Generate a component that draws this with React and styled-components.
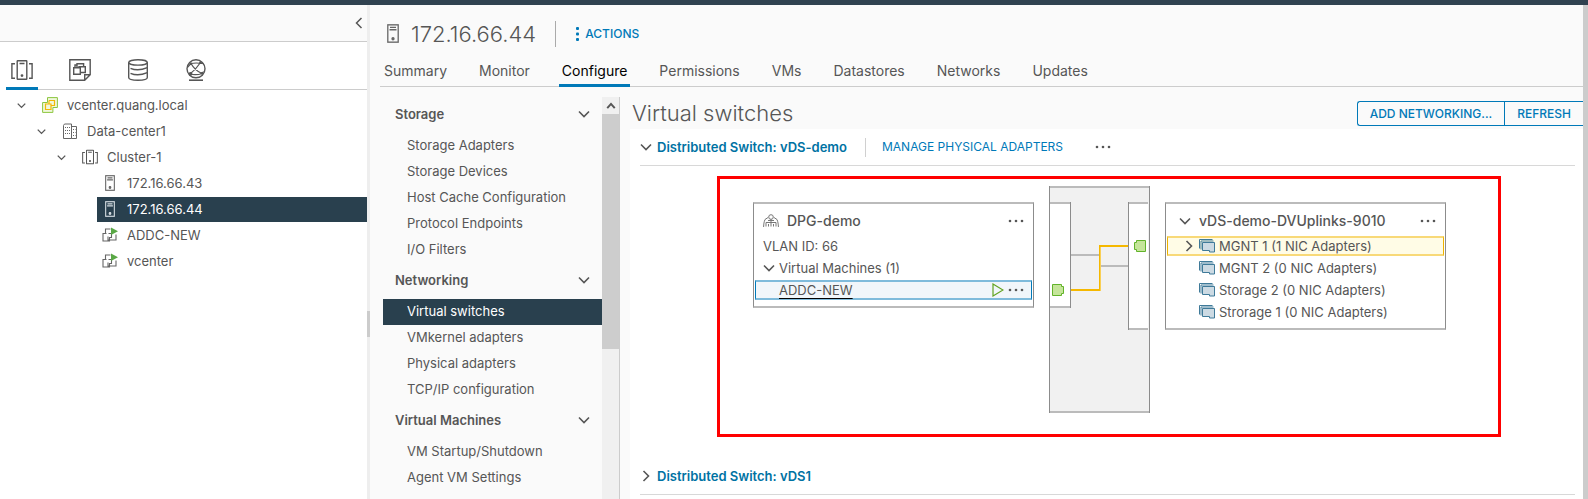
import React from "react";
import styled, { createGlobalStyle, css } from "styled-components";

const Global = createGlobalStyle`
  *, *::before, *::after { box-sizing: border-box; }
  body {
    margin: 0;
    background: #fafafa;
    color: #565656;
    font: 400 13px/24px Inter, "Open Sans", sans-serif;
  }
  button { font: inherit; color: inherit; background: none; border: 0; padding: 0; cursor: pointer; }
  a { color: inherit; text-decoration: none; }
  ul { list-style: none; margin: 0; padding: 0; }
  h1, h2, h3 { margin: 0; font-weight: inherit; font-size: inherit; }
  svg { display: block; flex: none; }
`;

const blue = "#0079b8";
const navy = "#29404e";

/* ---------- shell ---------- */
const Shell = styled.div`
  display: flex;
  flex-direction: column;
  height: 100vh;
  overflow: hidden;
`;
const TopBar = styled.header`
  flex: none;
  height: 5px;
  background: #304250;
`;
const Columns = styled.div`
  flex: 1;
  display: flex;
  min-height: 0;
`;
const Sidebar = styled.aside`
  flex: none;
  width: 367px;
  background: #fff;
`;
const SidebarHead = styled.div`
  display: flex;
  align-items: center;
  justify-content: flex-end;
  height: 37px;
  padding-right: 2px;
  background: #fafafa;
  border-bottom: 1px solid #ccc;
`;
const Splitter = styled.div`
  flex: none;
  display: flex;
  align-items: center;
  width: 3px;
  background: #eee;
`;
const Grip = styled.div`
  width: 3px;
  height: 26px;
  margin-top: 144px;
  background: #ccc;
`;
const Main = styled.main`
  flex: 1;
  min-width: 0;
  display: flex;
  flex-direction: column;
`;
const PageScroll = styled.div`
  flex: none;
  width: 5px;
  background: #ccc;
`;

/* ---------- inventory ---------- */
const ViewTabs = styled.div`
  display: flex;
  gap: 26px;
  height: 48px;
  margin-left: 6px;
  border-bottom: 1px solid #ccc;
`;
const ViewTab = styled.button`
  display: flex;
  align-items: center;
  justify-content: center;
  width: 32px;
  height: 48px;
  padding-top: 10px;
  border-bottom: 3px solid ${(p) => (p.$active ? blue : "transparent")};
`;
const Tree = styled.ul`
  padding-top: 2px;
`;
const TreeItem = styled.li`
  padding-left: ${(p) => p.$depth * 20}px;
  height: 26px;
  padding-top: 1px;
`;
const TreeLink = styled.a`
  display: flex;
  align-items: center;
  height: 25px;
  margin-left: ${(p) => (p.$leaf ? 17 : 0)}px;
  padding: 0 0 1px ${(p) => (p.$leaf ? 4 : 17)}px;
  ${(p) => p.$active && css`
    background: ${navy};
    color: #fff;
  `}
`;
const TreeIcon = styled.span`
  display: flex;
  justify-content: center;
  width: 18px;
  margin: 0 8px 0 ${(p) => (p.$leaf ? 0 : 15)}px;
`;

/* ---------- object header ---------- */
const ObjectHead = styled.div`
  display: flex;
  align-items: center;
  height: 56px;
  padding: 1px 0 0 17px;
`;
const ObjectName = styled.h1`
  margin: 0 19px 0 12px;
  font-size: 22px;
  font-weight: 300;
  line-height: 28px;
`;
const Rule = styled.span`
  width: 1px;
  height: ${(p) => (p.$tall ? 26 : 19)}px;
  background: ${(p) => (p.$tall ? "#aaa" : "#d0d0d0")};
`;
const Caps = styled.button`
  display: inline-flex;
  align-items: center;
  gap: 6px;
  font-size: 12px;
  font-weight: 500;
  text-transform: uppercase;
  white-space: nowrap;
  color: ${blue};
`;
const ActionsButton = styled(Caps)`
  margin-left: 20px;
`;
const Tabs = styled.nav`
  display: flex;
  gap: 26px;
  height: 26px;
  margin-left: 10px;
  padding-left: 1px;
  border-bottom: 1px solid #ccc;
`;
const Tab = styled.button`
  height: 26px;
  padding: 0 3px 3px;
  font-size: 14px;
  line-height: 20px;
  border-bottom: 3px solid ${(p) => (p.$active ? blue : "transparent")};
  color: ${(p) => (p.$active ? "#000" : "#565656")};
`;

/* ---------- configure ---------- */
const Work = styled.div`
  flex: 1;
  display: flex;
  min-height: 0;
`;
const Settings = styled.nav`
  flex: none;
  width: 232px;
  padding: 10px 0 0 13px;
  overflow: hidden;
`;
const GroupHead = styled.button`
  display: flex;
  align-items: center;
  justify-content: space-between;
  width: 100%;
  height: 36px;
  padding: 0 12px 2px;
  font-weight: 600;
`;
const SettingLink = styled.a`
  display: block;
  height: 26px;
  padding-left: 24px;
  ${(p) => p.$active && css`
    background: ${navy};
    color: #fff;
  `}
`;
const NavScroll = styled.div`
  flex: none;
  width: 18px;
  margin: 10px 10px 0 0;
  background: #f0f0f0;
  border-right: 1px solid #ccc;
`;
const NavScrollUp = styled.button`
  display: flex;
  align-items: center;
  justify-content: center;
  width: 17px;
  height: 17px;
`;
const NavThumb = styled.div`
  height: 235px;
  background: #cdcdcd;
`;
const Content = styled.section`
  flex: 1;
  min-width: 0;
  display: flex;
  flex-direction: column;
`;
const TitleRow = styled.div`
  display: flex;
  justify-content: space-between;
  height: 42px;
  padding: 14px 0 0 2px;
`;
const Title = styled.h2`
  font-size: 22px;
  font-weight: 300;
`;
const ButtonGroup = styled.div`
  display: flex;
  height: 25px;
  border: 1px solid ${blue};
  border-right: 0;
  border-radius: 3px 0 0 3px;
`;
const GroupButton = styled(Caps)`
  padding: 0 12px;
  & + & { border-left: 1px solid ${blue}; }
`;
const Board = styled.div`
  flex: 1;
  padding: 0 8px 0 10px;
  background: #fff;
`;
const SwitchHead = styled.div`
  display: flex;
  align-items: center;
  height: 37px;
  border-bottom: 1px solid #d8d8d8;
`;
const SwitchToggle = styled.button`
  display: flex;
  align-items: center;
  gap: 5px;
  margin-right: 18px;
  font-weight: 600;
  color: #0072a3;
`;
const Manage = styled(Caps)`
  margin: 0 32px 0 16px;
  font-weight: 400;
`;
const Highlight = styled.div`
  height: 261px;
  margin: 10px 74px 21px 77px;
  padding: 7px 33px 0;
  border: 3px solid #f00;
`;
const Topology = styled.div`
  display: flex;
  align-items: flex-start;
  gap: 15px;
`;
const Card = styled.article`
  display: flex;
  flex-direction: column;
  gap: 2px;
  width: 281px;
  margin-top: 16px;
  padding: 4px 1px 6px;
  border: solid #8c8c8c;
  border-width: 2px 1px;
  border-top-color: #bbb;
  border-bottom-color: #bbb;
`;
const CardHead = styled.div`
  display: flex;
  align-items: center;
  height: 26px;
  padding: 0 8px 0 ${(p) => (p.$wide ? 12 : 8)}px;
`;
const CardTitle = styled.h3`
  flex: 1;
  margin-left: 8px;
  font-size: 14px;
  font-weight: 500;
`;
const CardRow = styled.div`
  display: flex;
  align-items: center;
  gap: 4px;
  height: 20px;
  padding: 0 7px 0 ${(p) => p.$indent}px;
  border: solid transparent;
  border-width: 2px 1px;
  ${(p) => p.$tone === "blue" && css`
    background: #f1f6fa;
    border-color: #7fbbdb ${blue};
  `}
  ${(p) => p.$tone === "gold" && css`
    background: #fffce6;
    border-color: #f8d978 #edb200;
  `}
`;
const RowLabel = styled.span`
  flex: 1;
`;
const VmLink = styled.a`
  margin-right: auto;
  text-decoration: underline;
  text-decoration-color: #000;
  text-underline-offset: 3px;
`;
const IconButton = styled.button`
  display: flex;
`;
const UplinkBlank = styled.span`
  width: 12px;
`;

/* ---------- icons ---------- */
const Chevron = ({ dir = "down", size = 12, w = 1.6 }) => {
  const d = {
    down: "M1 3.5l5 5 5-5",
    up: "M1.5 8.5l4.5-5 4.5 5",
    left: "M8.5 1l-5 5 5 5",
    right: "M3.5 1l5 5-5 5",
  }[dir];
  return (
    <svg width={size} height={size} viewBox="0 0 12 12" fill="none" stroke="#565656" strokeWidth={w} aria-hidden="true">
      <path d={d} />
    </svg>
  );
};
const Dots = () => (
  <svg width="16" height="4" viewBox="0 0 16 4" fill="#565656" aria-hidden="true">
    <circle cx="2" cy="2" r="1.3" /><circle cx="8" cy="2" r="1.3" /><circle cx="14" cy="2" r="1.3" />
  </svg>
);
const ClusterIcon = ({ size = 22 }) => (
  <svg width={size} height={size} viewBox="0 0 22 22" fill="none" stroke="#565656" strokeWidth="1.4" aria-hidden="true">
    <rect x="6.2" y="1.7" width="9.6" height="18.6" rx="0.5" />
    <path d="M8.5 4.5h5M4 4.7H.9v14.6H4M18 4.7h3.1v14.6H18" />
    <circle cx="11" cy="16.6" r="0.7" fill="#565656" />
  </svg>
);
const VmsIcon = () => (
  <svg width="22" height="22" viewBox="0 0 22 22" fill="none" stroke="#565656" strokeWidth="1.4" aria-hidden="true">
    <path d="M.8.8h20.4v14.9l-5.5 5.5H.8zM15.700 21.200v-5.500h5.500" />
    <path d="M4.700 8.700h6.600v6.600H4.700zM8 8.700V4.700h6.600v3.500M11.300 13.500h5V7.700H10v1M6 8.500V6h2" />
  </svg>
);
const StorageIcon = () => (
  <svg width="22" height="22" viewBox="0 0 22 22" fill="none" stroke="#565656" strokeWidth="1.4" aria-hidden="true">
    <ellipse cx="11" cy="3.4" rx="9.3" ry="2.7" />
    <path d="M1.7 3.4v15.2c0 3.6 18.6 3.6 18.6 0V3.4" />
    <path d="M3.5 9.3c4 1.8 11 1.8 16.8-.6M3.5 14.3c4 1.8 11 1.8 16.8-.6" />
  </svg>
);
const NetworkIcon = () => (
  <svg width="22" height="22" viewBox="0 0 22 22" fill="none" stroke="#565656" strokeWidth="1.2" aria-hidden="true">
    <circle cx="11" cy="9.800" r="9" strokeWidth="1.400" />
    <path d="M4 21.200h14" strokeWidth="1.600" />
    <path d="M6 4.500c4-1 8.500-.5 12.500 0M6 4.500c2.500 4.500 6 8 11 10M15.500 3.500C12.500 8 9 12 5 15M2.300 8.500L6 4.500M5 15c3 .8 8.500.8 12-.5l1.500-2" />
    <g fill="#565656" stroke="none"><circle cx="5.500" cy="14.800" r="1.900" /><circle cx="17" cy="14.300" r="1.400" /><circle cx="6" cy="4.600" r="1.200" /><circle cx="15.500" cy="3.600" r="1.300" /></g>
  </svg>
);
const VcenterIcon = () => (
  <svg width="16" height="16" viewBox="0 0 16 16" fill="none" aria-hidden="true">
    <path d="M5.500.6h9.900v9.900h-4.500v4.900H.6V5.500h4.900z" fill="#f0f8dc" stroke="#8cc63f" />
    <path d="M7 3.500h5.500v5H9.500M7 3.500v3M3.500 7h5.500v5.500H3.500z" stroke="#f2b705" strokeWidth="1.200" />
  </svg>
);
const DatacenterIcon = () => (
  <svg width="16" height="16" viewBox="0 0 16 16" fill="none" stroke="#666" aria-hidden="true">
    <path d="M1.500 15.500V2.500l1-1.500h7v14.500zM9.500 3.500h5v12h-5" />
    <path d="M3 4.500h5M3 7.500h5M3 10.500h5M11 6.500h2.500M11 9.500h2.500M11 12.500h2.500" strokeDasharray="1 1" />
  </svg>
);
const HostIcon = ({ color = "#666", w = 12, h = 16 }) => (
  <svg width={w} height={h} viewBox="0 0 12 18" preserveAspectRatio="none" fill="none" stroke={color} strokeWidth="1.3" aria-hidden="true">
    <rect x="0.800" y="0.800" width="10.400" height="16.400" />
    <path d="M3 3.200h6M2.500 5.500h7" />
    <circle cx="6" cy="14" r="1" fill={color} />
  </svg>
);
const VmOnIcon = () => (
  <svg width="16" height="16" viewBox="0 0 16 16" fill="none" stroke="#666" strokeWidth="1.1" aria-hidden="true">
    <path d="M3.500 6V2h5M4.500 6.500H1v7.500h6.500V11M6 9.500v3.500h8V7.500M6.500 6.500h3v4H7" />
    <path d="M9 .5l7 3.700-7 3.800z" fill="#5aa846" stroke="none" />
  </svg>
);
const PortGroupIcon = () => (
  <svg width="16" height="14" viewBox="0 0 16 14" fill="none" stroke="#777" aria-hidden="true">
    <circle cx="8" cy="3" r="2.300" />
    <path d="M5 3.500L2 5.500C1 8 .7 10 .6 13M11 3.500l3 2c1 2.500 1.300 4.500 1.400 7.500M3 12.500V8.500h10v4M5.500 12.500V10M8 12.500V5M10.500 12.500V10M5 6.500h6" />
  </svg>
);
const NicIcon = () => (
  <svg width="16" height="14" viewBox="0 0 16 14" fill="#ccdae3" stroke="#3f7a99" aria-hidden="true">
    <path d="M.5 9.500v-9h13" fill="none" />
    <path d="M2 10.500V2h12.500" fill="none" />
    <path d="M3.500 3.500h12v9.500h-5v-1.500h-7z" />
  </svg>
);
const PlayIcon = () => (
  <svg width="12" height="14" viewBox="0 0 12 14" fill="none" stroke="#62a420" strokeWidth="1.2" aria-hidden="true">
    <path d="M1 1l10 6-10 6z" />
  </svg>
);
const MoreVertical = () => (
  <svg width="3" height="14" viewBox="0 0 3 14" fill={blue} aria-hidden="true">
    <rect width="3" height="3" rx="1" /><rect y="5.500" width="3" height="3" rx="1" /><rect y="11" width="3" height="3" rx="1" />
  </svg>
);

/* Backplane of the switch: port columns and the wires between them */
const Backplane = () => (
  <svg width="101" height="227" viewBox="0 0 101 227" role="img" aria-label="Switch connections">
    <rect width="101" height="227" fill="#f1f1f1" />
    <path d="M0 0h101v2H0zM0 225h101v2H0z" fill="#bbb" />
    <path d="M0 0h1v227H0zM100 0h1v227h-1z" fill="#8c8c8c" />
    <path d="M1 16h21v106H1zM79 16h20v128H79z" fill="#fff" />
    <path d="M1 16h20v2H1zM1 120h20v2H1zM79 16h20v2H79zM79 142h20v2H79z" fill="#bbb" />
    <path d="M21 16h1v106h-1zM79 16h1v128h-1z" fill="#8c8c8c" />
    <path d="M22 68h28v2H22zM52 79h27v2H52z" fill="#bbb" />
    <path d="M50 59h2v46h-2z" fill="#f9cf55" />
    <path d="M22 103h29v2H22zM50 59h29v2H50zM50 59h1v46h-1z" fill="#f5b800" />
    <g fill="#c5e59a" stroke="#62b32a">
      <path d="M3.500 98.500h9v2h2v7h-2v2h-9z" />
      <path d="M96.500 54.500h-9v2h-2v7h2v2h9z" />
    </g>
  </svg>
);

/* ---------- data ---------- */
const views = [
  ["Hosts and Clusters", <ClusterIcon />],
  ["VMs and Templates", <VmsIcon />],
  ["Storage", <StorageIcon />],
  ["Networking", <NetworkIcon />],
];
const tree = [
  { label: "vcenter.quang.local", depth: 0, icon: <VcenterIcon /> },
  { label: "Data-center1", depth: 1, icon: <DatacenterIcon /> },
  { label: "Cluster-1", depth: 2, icon: <ClusterIcon size={16} /> },
  { label: "172.16.66.43", depth: 4, leaf: true, icon: <HostIcon w={10} /> },
  { label: "172.16.66.44", depth: 4, leaf: true, active: true, icon: <HostIcon w={10} color="#d5dde2" /> },
  { label: "ADDC-NEW", depth: 4, leaf: true, icon: <VmOnIcon /> },
  { label: "vcenter", depth: 4, leaf: true, icon: <VmOnIcon /> },
];
const tabs = ["Summary", "Monitor", "Configure", "Permissions", "VMs", "Datastores", "Networks", "Updates"];
const settings = [
  ["Storage", ["Storage Adapters", "Storage Devices", "Host Cache Configuration", "Protocol Endpoints", "I/O Filters"]],
  ["Networking", ["Virtual switches", "VMkernel adapters", "Physical adapters", "TCP/IP configuration"]],
  ["Virtual Machines", ["VM Startup/Shutdown", "Agent VM Settings"]],
];
const uplinks = [
  ["MGNT 1 (1 NIC Adapters)", true],
  ["MGNT 2 (0 NIC Adapters)", false],
  ["Storage 2 (0 NIC Adapters)", false],
  ["Strorage 1 (0 NIC Adapters)", false],
];

export default function App() {
  return (
    <Shell>
      <Global />
      <TopBar />
      <Columns>
        <Sidebar>
          <SidebarHead>
            <IconButton aria-label="Collapse inventory"><Chevron dir="left" w={1.5} /></IconButton>
          </SidebarHead>
          <ViewTabs>
            {views.map(([name, icon], i) => (
              <ViewTab key={name} aria-label={name} $active={i === 0}>{icon}</ViewTab>
            ))}
          </ViewTabs>
          <Tree>
            {tree.map((n) => (
              <TreeItem key={n.label} $depth={n.depth}>
                <TreeLink href="#" $leaf={n.leaf} $active={n.active}>
                  {!n.leaf && <Chevron size={9} w={1.8} />}
                  <TreeIcon $leaf={n.leaf}>{n.icon}</TreeIcon>
                  {n.label}
                </TreeLink>
              </TreeItem>
            ))}
          </Tree>
        </Sidebar>
        <Splitter><Grip /></Splitter>
        <Main>
          <ObjectHead>
            <HostIcon w={12} h={19} />
            <ObjectName>172.16.66.44</ObjectName>
            <Rule $tall />
            <ActionsButton><MoreVertical />Actions</ActionsButton>
          </ObjectHead>
          <Tabs>
            {tabs.map((t) => (
              <Tab key={t} $active={t === "Configure"}>{t}</Tab>
            ))}
          </Tabs>
          <Work>
            <Settings>
              {settings.map(([group, items]) => (
                <div key={group}>
                  <GroupHead>{group}<Chevron /></GroupHead>
                  {items.map((s) => (
                    <SettingLink key={s} href="#" $active={s === "Virtual switches"}>{s}</SettingLink>
                  ))}
                </div>
              ))}
            </Settings>
            <NavScroll>
              <NavScrollUp aria-label="Scroll up"><Chevron dir="up" size={10} w={2.4} /></NavScrollUp>
              <NavThumb />
            </NavScroll>
            <Content>
              <TitleRow>
                <Title>Virtual switches</Title>
                <ButtonGroup>
                  <GroupButton>Add networking...</GroupButton>
                  <GroupButton>Refresh</GroupButton>
                </ButtonGroup>
              </TitleRow>
              <Board>
                <SwitchHead>
                  <SwitchToggle><Chevron />Distributed Switch: vDS-demo</SwitchToggle>
                  <Rule />
                  <Manage>Manage physical adapters</Manage>
                  <IconButton aria-label="More actions"><Dots /></IconButton>
                </SwitchHead>
                <Highlight>
                  <Topology>
                    <Card>
                      <CardHead>
                        <PortGroupIcon />
                        <CardTitle>DPG-demo</CardTitle>
                        <IconButton aria-label="DPG-demo actions"><Dots /></IconButton>
                      </CardHead>
                      <CardRow $indent={7}><RowLabel>VLAN ID: 66</RowLabel></CardRow>
                      <CardRow $indent={7}><Chevron /><RowLabel>Virtual Machines (1)</RowLabel></CardRow>
                      <CardRow $indent={23} $tone="blue">
                        <VmLink href="#">ADDC-NEW</VmLink>
                        <PlayIcon />
                        <IconButton aria-label="ADDC-NEW actions"><Dots /></IconButton>
                      </CardRow>
                    </Card>
                    <Backplane />
                    <Card>
                      <CardHead $wide>
                        <Chevron />
                        <CardTitle>vDS-demo-DVUplinks-9010</CardTitle>
                        <IconButton aria-label="Uplink actions"><Dots /></IconButton>
                      </CardHead>
                      {uplinks.map(([name, on]) => (
                        <CardRow key={name} $indent={15} $tone={on ? "gold" : undefined}>
                          {on ? <Chevron dir="right" /> : <UplinkBlank />}
                          <NicIcon />
                          <RowLabel>{name}</RowLabel>
                        </CardRow>
                      ))}
                    </Card>
                  </Topology>
                </Highlight>
                <SwitchHead>
                  <SwitchToggle><Chevron dir="right" />Distributed Switch: vDS1</SwitchToggle>
                </SwitchHead>
              </Board>
            </Content>
          </Work>
        </Main>
        <PageScroll />
      </Columns>
    </Shell>
  );
}
